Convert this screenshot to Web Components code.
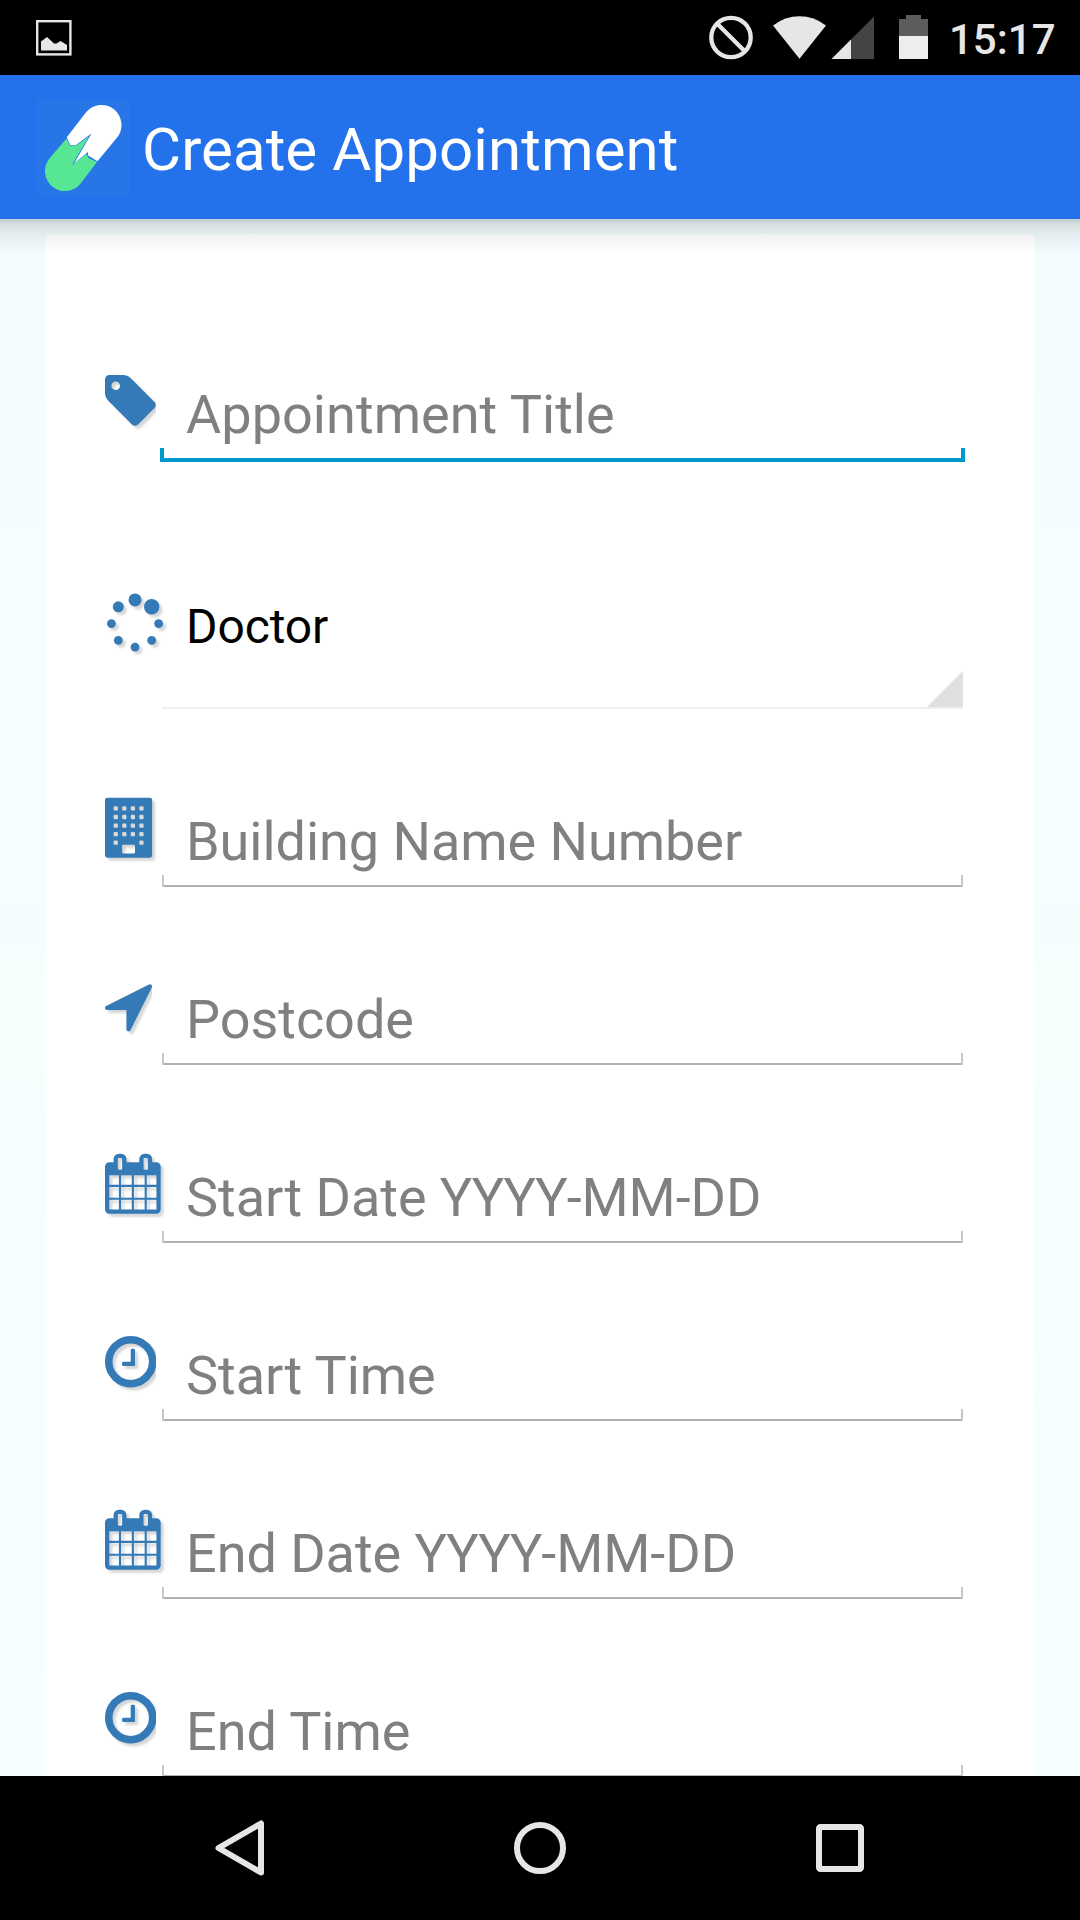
<!DOCTYPE html>
<html lang="en">
<head>
<meta charset="utf-8">
<title>Create Appointment</title>
<style>
html,body{margin:0;padding:0;background:#000;font-family:Roboto,"Noto Sans",sans-serif}
</style>
</head>
<body>
<phone-screen></phone-screen>
<script>
const define = (name, html) => customElements.define(name, class extends HTMLElement {
  connectedCallback() {
    if (this.shadowRoot) return;
    const t = document.createElement('template');
    t.innerHTML = typeof html === 'function' ? html(this) : html;
    this.attachShadow({ mode: 'open' }).append(t.content.cloneNode(true));
  }
});

/* width of the glyph box, x origin in the 1792 unit grid, drawing */
const icons = {
  tag: [51, 128, '<path d="M576 448q0-53-37.5-90.5t-90.5-37.5-90.5 37.5-37.5 90.5 37.5 90.5 90.5 37.5 90.5-37.5 37.5-90.5zm1067 576q0 53-37 90l-491 492q-39 37-91 37-53 0-90-37l-715-716q-38-37-64.5-101t-26.5-117v-416q0-52 38-90t90-38h416q53 0 117 26.5t102 64.5l715 714q37 39 37 91z"/>'],
  arrow: [47, 193, '<path d="M1593 349l-640 1280q-17 35-57 35-5 0-15-2-22-5-35.5-22.5t-13.5-39.5v-576h-576q-22 0-39.5-13.5t-22.5-35.5 4-42 29-30l1280-640q13-7 29-7 27 0 45 19 15 14 18.5 34.5t-6.5 39.5z"/>'],
  building: [57, 0, '<path d="M64 0h1280q64 0 64 64v1664q0 64-64 64h-1280q-64 0-64-64v-1664q0-64 64-64z' +
    [0,1,2,3,4].flatMap(r => [0,1,2,3].filter(c => r < 4 || c % 3 === 0).map(c => `M${256+256*c} ${256+256*r}m32 0q-32 0-32 32v64q0 32 32 32h64q32 0 32-32v-64q0-32-32-32z`)).join('') +
    'M544 1408q-32 0-32 32v192q0 32 32 32h320q32 0 32-32v-192q0-32-32-32z"/>'],
  calendar: [60, 64, '<path d="M192 1664h288v-288h-288v288zm352 0h320v-288h-320v288zm-352-352h288v-320h-288v320zm352 0h320v-320h-320v320zm-352-384h288v-288h-288v288zm736 736h320v-288h-320v288zm-384-736h320v-288h-320v288zm768 736h288v-288h-288v288zm-384-352h320v-320h-320v320zm-352-864v-288q0-13-9.5-22.5t-22.5-9.5h-64q-13 0-22.5 9.5t-9.5 22.5v288q0 13 9.5 22.5t22.5 9.5h64q13 0 22.5-9.5t9.5-22.5zm736 864h288v-320h-288v320zm-384-384h320v-288h-320v288zm384 0h288v-288h-288v288zm32-480v-288q0-13-9.5-22.5t-22.5-9.5h-64q-13 0-22.5 9.5t-9.5 22.5v288q0 13 9.5 22.5t22.5 9.5h64q13 0 22.5-9.5t9.5-22.5zm384-64v1280q0 52-38 90t-90 38h-1408q-52 0-90-38t-38-90v-1280q0-52 38-90t90-38h128v-96q0-66 47-113t113-47h64q66 0 113 47t47 113v96h384v-96q0-66 47-113t113-47h64q66 0 113 47t47 113v96h128q52 0 90 38t38 90z"/>'],
  clock: [51, 128, '<path d="M1024 544v448q0 14-9 23t-23 9h-320q-14 0-23-9t-9-23v-64q0-14 9-23t23-9h224v-352q0-14 9-23t23-9h64q14 0 23 9t9 23zm416 352q0-148-73-273t-198-198-273-73-273 73-198 198-73 273 73 273 198 198 273 73 273-73 198-198 73-273zm224 0q0 209-103 385.5t-279.5 279.5-385.5 103-385.5-103-279.5-279.5-103-385.5 103-385.5 279.5-279.5 385.5-103 385.5 103 279.5 279.5 103 385.5z"/>'],
  spinner: [62, 0, '<g transform="scale(29.8667)"><circle cx="30" cy="10.2" r="6.5"/><circle cx="13.3" cy="17.1" r="5.5"/><circle cx="46.7" cy="17.1" r="7.7"/><circle cx="6.4" cy="33.900" r="4.4"/><circle cx="53.6" cy="33.900" r="4.4"/><circle cx="13.3" cy="50.600" r="4.4"/><circle cx="46.7" cy="50.600" r="4.4"/><circle cx="30" cy="57.400" r="4.4"/></g>']
};

define('form-icon', el => {
  const [w, x, body] = icons[el.getAttribute('name')];
  const u = 1792 / 60;
  return `<style>:host{display:block;height:66px}svg{display:block}
    g.glyph{fill:#337ab7;filter:drop-shadow(3px 3px 1.2px rgba(0,0,0,.16))}</style>
    <svg width="${w}" height="66" viewBox="0 0 ${w} 66"><g class="glyph"><g fill-rule="evenodd" transform="translate(0 .7) scale(${1/u}) translate(${-x} 0)">${body}</g></g></svg>`;
});

define('form-field', el => `<style>
  :host{display:flex;align-items:flex-end;height:178px;box-sizing:border-box;padding:0 72px 0 60px}
  :host([focused]){height:228px;padding:0 70px 0 60px}
  form-icon{width:57px;margin-bottom:24px}
  :host([focused]) form-icon{width:55px;margin-bottom:26px}
  .input{flex:1;display:flex;flex-direction:column}
  .text{font-size:54px;line-height:64px;height:64px;color:#808080;padding-left:24px;white-space:nowrap;margin-bottom:1px;letter-spacing:-.04px}
  :host([focused]) .text{padding-left:26px;letter-spacing:.05px}
  .line{height:10px;border:solid #c8c8c8;border-width:0 2px}
  .base{height:2px;background:linear-gradient(90deg,#c8c8c8 2px,#b1b1b1 2px,#b1b1b1 calc(100% - 2px),#c8c8c8 0)}
  :host([focused]) .line{border-color:#0099cc;border-width:0 4px}
  :host([focused]) .base{height:4px;background:#0099cc}
  :host([focused]) .text{margin-bottom:1px}
  ::slotted(.year){letter-spacing:-1.1px}
</style>
<form-icon name="${el.getAttribute('icon')}"></form-icon>
<div class="input"><div class="text"><slot></slot></div><div class="line"></div><div class="base"></div></div>`);

define('form-select', `<style>
  :host{display:flex;align-items:flex-end;height:247px;box-sizing:border-box;padding:0 72px 0 60px}
  form-icon{width:57px;margin-bottom:54px;flex:none}
  .box{flex:1;display:flex;flex-direction:column;border-bottom:2px solid #efefef}
  .text{font-size:48px;line-height:56px;color:#000;padding-left:24px;margin-bottom:16px;letter-spacing:-.1px}
  svg{display:block;align-self:flex-end}
</style>
<form-icon name="spinner"></form-icon>
<div class="box"><div class="text"><slot></slot></div>
<svg width="36" height="36"><path d="M36 0V36H0z" fill="#e0e0e0"/></svg></div>`);

define('status-bar', `<style>
  :host{display:flex;align-items:flex-start;height:75px;background:#000;color:#e6e6e6}
  svg{display:block;flex:none}
  .gap{flex:1}
  .time{font-size:42px;font-weight:500;line-height:50px;margin:15px 23px 0 9px;width:108px;white-space:nowrap}
</style>
<svg width="90" height="75"><rect x="37.2" y="21.2" width="33.2" height="33.2" fill="none" stroke="#e6e6e6" stroke-width="2.4"/><path d="M41 50.500V41.500l6-4.500 7 6.500h2.500l4-2.500 6.500 4v5.500z" fill="#e6e6e6"/></svg>
<div class="gap"></div>
<svg width="240" height="75" viewBox="700 0 240 75">
  <circle cx="731" cy="37.500" r="19.700" fill="none" stroke="#e6e6e6" stroke-width="4.300"/><path d="M717.500 24l27 27" stroke="#e6e6e6" stroke-width="4.300"/>
  <path d="M773 25.500Q785 16.300 799.500 16.300T826 25.500L799.500 58.700z" fill="#e6e6e6"/>
  <path d="M874 16.500V59H831.500z" fill="#444"/><path d="M851 39.500V59H831.500z" fill="#e6e6e6"/>
  <path d="M906 15h15v4h7v17h-29v-17h7z" fill="#5c5c5c"/><path d="M899 36h29v23h-29z" fill="#eee"/>
</svg>
<div class="time">15:17</div>`);

define('app-bar', `<style>
  :host{display:flex;align-items:center;height:144px;background:#2472eb;color:#fff;position:relative;z-index:1}
  svg{display:block;margin-left:37px;background:#2875e8}
  .title{font-size:60px;line-height:70px;margin-left:12px;padding-top:5px;white-space:nowrap;letter-spacing:.09px}
  .shade{position:absolute;left:0;right:0;top:144px;height:36px;background:linear-gradient(rgba(16,22,10,.19) 0,rgba(16,22,10,.18) 3px,rgba(16,22,10,.14) 3px,rgba(10,10,10,.07) 14px,rgba(0,0,0,.015) 28px,transparent)}
</style>
<svg width="93" height="96" viewBox="37 99 93 96">
  <path d="M66.800 137.300L86.100 112.200A20 20 0 0 1 116.900 137.800L97.500 161.200 88 155.500V152L74 163.500 91.500 133.500 76 145 70.300 145.200z" fill="#fff"/>
  <path d="M66.500 138.500L49.600 158.200A20 20 0 0 0 80.400 183.800L97 162 88.500 158 86.500 154 72 165 89 136.500 77 145 70 146z" fill="#57e794"/>
</svg>
<div class="title"><slot></slot></div><div class="shade"></div>`);

define('nav-bar', `<style>
  :host{display:flex;justify-content:center;height:144px;background:#000}
  svg{display:block;width:300px;height:144px;fill:none;stroke:#e6e6e6;stroke-width:6;stroke-linejoin:round}
</style>
<svg viewBox="90 1776 300 144"><path d="M261 1823.500v49L218.500 1848z"/></svg>
<svg viewBox="390 1776 300 144"><circle cx="540" cy="1848" r="23"/></svg>
<svg viewBox="690 1776 300 144"><rect x="819" y="1827" width="42" height="42" rx="1.500"/></svg>`);

define('form-card', `<style>
  :host{display:flex;flex-direction:column;background:#fff;margin:15px 45px 0}
</style><slot></slot>`);

define('phone-screen', `<style>
  :host{display:flex;flex-direction:column;width:1080px;height:1920px;overflow:hidden;background:#000}
  main{height:1557px;overflow:hidden;display:flow-root;background:linear-gradient(#f2fcfe,#f4fdff 20%,#f4fdff 44%,#f5fffd 49%,#f5fffd 54%,#f4feff 58%,#f5ffff)}
</style>
<status-bar></status-bar>
<app-bar>Create Appointment</app-bar>
<main><form-card>
  <form-field icon="tag" focused>Appointment Title</form-field>
  <form-select>Doctor</form-select>
  <form-field icon="building">Building Name Number</form-field>
  <form-field icon="arrow">Postcode</form-field>
  <form-field icon="calendar">Start Date <span class="year">YYYY</span>-MM-DD</form-field>
  <form-field icon="clock">Start Time</form-field>
  <form-field icon="calendar">End Date <span class="year">YYYY</span>-MM-DD</form-field>
  <form-field icon="clock">End Time</form-field>
</form-card></main>
<nav-bar></nav-bar>`);
</script>
</body>
</html>
